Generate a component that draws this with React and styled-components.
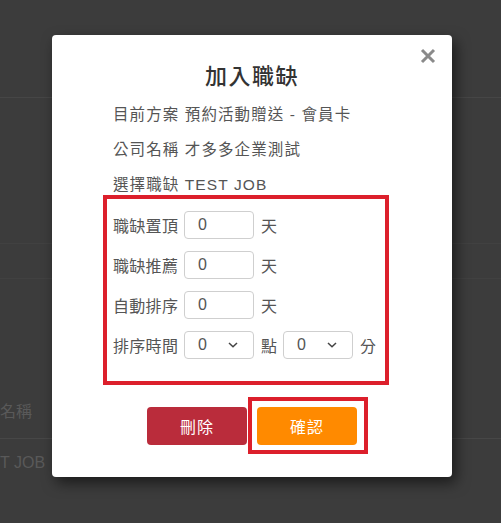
import React from 'react';
import styled, { createGlobalStyle } from 'styled-components';

const GlobalStyle = createGlobalStyle`
  html, body {
    margin: 0;
    padding: 0;
    background: #3c3c3c;
  }
  body {
    font-family: "Liberation Sans", "Noto Sans CJK TC", sans-serif;
    width: 501px;
    height: 523px;
    overflow: hidden;
  }
`;

const Page = styled.div`
  position: relative;
  width: 501px;
  height: 523px;
  background: #3c3c3c;
  color: #595959;
  font-size: 16px;
`;

const Header = styled.div`
  height: 97px;
  border-bottom: 1px solid #464646;
`;

const Band = styled.div`
  margin-top: 145px;
  height: 34px;
  border-top: 1px solid #414141;
  border-bottom: 1px solid #414141;
`;

const TableRow = styled.div`
  height: ${p => p.$h}px;
  box-sizing: border-box;
  display: flex;
  align-items: center;
  border-bottom: ${p => (p.$line ? '1px solid #474747' : 'none')};
  margin-top: ${p => p.$top || 0}px;
  padding-bottom: ${p => p.$pb || 0}px;
`;

const Overlay = styled.div`
  position: absolute;
  inset: 0;
`;

const Modal = styled.div`
  position: absolute;
  left: 52px;
  top: 35px;
  width: 400px;
  height: 442px;
  box-sizing: border-box;
  background: #fff;
  border-radius: 4px;
  box-shadow: 4px 6px 14px rgba(0, 0, 0, 0.55);
  padding: 27px 0 0 61px;
  color: #555;
`;

const Close = styled.button`
  position: absolute;
  right: 14px;
  top: 12px;
  width: 20px;
  height: 20px;
  padding: 0;
  border: none;
  background: none;
  cursor: pointer;
`;

const Title = styled.h2`
  margin: 0 0 0 -61px;
  height: 30px;
  line-height: 30px;
  text-align: center;
  font-size: 22px;
  font-weight: 500;
  color: #333;
  letter-spacing: 1.5px;
`;

const InfoLine = styled.div`
  margin-top: ${p => p.$top}px;
  height: 20px;
  line-height: 20px;
  font-size: 15.5px;
  letter-spacing: 1.1px;
`;

const SettingsBox = styled.div`
  margin-left: -10px;
  width: 286px;
  box-sizing: border-box;
  border: 4px solid #dc1f2b;
  padding: 12px 0 22px 6px;
  display: flex;
  flex-direction: column;
  gap: 12px;
`;

const Row = styled.div`
  display: flex;
  align-items: center;
  height: 28px;
`;

const Label = styled.span`
  width: 71px;
  font-size: 16px;
  letter-spacing: 0.3px;
`;

const Field = styled.div`
  width: 70px;
  height: 28px;
  box-sizing: border-box;
  border: 1px solid #cfcfcf;
  border-radius: 4px;
  display: flex;
  align-items: center;
  justify-content: space-between;
  padding: 0 14px 0 13px;
  font-size: 16px;
  color: #555;
`;

const Unit = styled.span`
  margin: 0 6px 0 7px;
  font-size: 16px;
`;

const ButtonRow = styled.div`
  display: flex;
  align-items: flex-start;
  gap: 1px;
  margin: 12px 0 0 34px;
`;

const Button = styled.button`
  width: 100px;
  height: 38px;
  border: none;
  border-radius: 4px;
  background: ${p => p.$bg};
  color: #fff;
  font-family: "Liberation Sans", "Noto Sans CJK TC", sans-serif;
  font-size: 16px;
  font-weight: 400;
  letter-spacing: 1px;
  margin-top: ${p => p.$top || 0}px;
  cursor: pointer;
`;

const Highlight = styled.div`
  border: 4px solid #dc1f2b;
  padding: 6px 7px 5px 5px;
`;

const Chevron = () => (
  <svg width="12" height="8" viewBox="0 0 12 8">
    <path d="M2 2 L6 5.8 L10 2" fill="none" stroke="#444" strokeWidth="1.5" />
  </svg>
);

const CloseIcon = () => (
  <svg width="16" height="16" viewBox="0 0 16 16">
    <path d="M2 2 L14 14 M14 2 L2 14" stroke="#8a8a8a" strokeWidth="3" />
  </svg>
);

const rows = [
  { label: '職缺置頂', unit: '天' },
  { label: '職缺推薦', unit: '天' },
  { label: '自動排序', unit: '天' },
];

export default function App() {
  return (
    <Page>
      <GlobalStyle />
      <Header />
      <Band />
      <TableRow $h={43} $top={117} $pb={14} $line>名稱</TableRow>
      <TableRow $h={48}>T JOB</TableRow>

      <Overlay>
        <Modal>
          <Close aria-label="close">
            <CloseIcon />
          </Close>
          <Title>加入職缺</Title>
          <InfoLine $top={13}>目前方案 預約活動贈送 - 會員卡</InfoLine>
          <InfoLine $top={15}>公司名稱 才多多企業測試</InfoLine>
          <InfoLine $top={15}>選擇職缺 TEST JOB</InfoLine>

          <SettingsBox>
            {rows.map(r => (
              <Row key={r.label}>
                <Label>{r.label}</Label>
                <Field>0</Field>
                <Unit>{r.unit}</Unit>
              </Row>
            ))}
            <Row>
              <Label>排序時間</Label>
              <Field>0<Chevron /></Field>
              <Unit>點</Unit>
              <Field>0<Chevron /></Field>
              <Unit>分</Unit>
            </Row>
          </SettingsBox>

          <ButtonRow>
            <Button $bg="#ba2c3b" $top={10}>刪除</Button>
            <Highlight>
              <Button $bg="#ff8a00">確認</Button>
            </Highlight>
          </ButtonRow>
        </Modal>
      </Overlay>
    </Page>
  );
}
